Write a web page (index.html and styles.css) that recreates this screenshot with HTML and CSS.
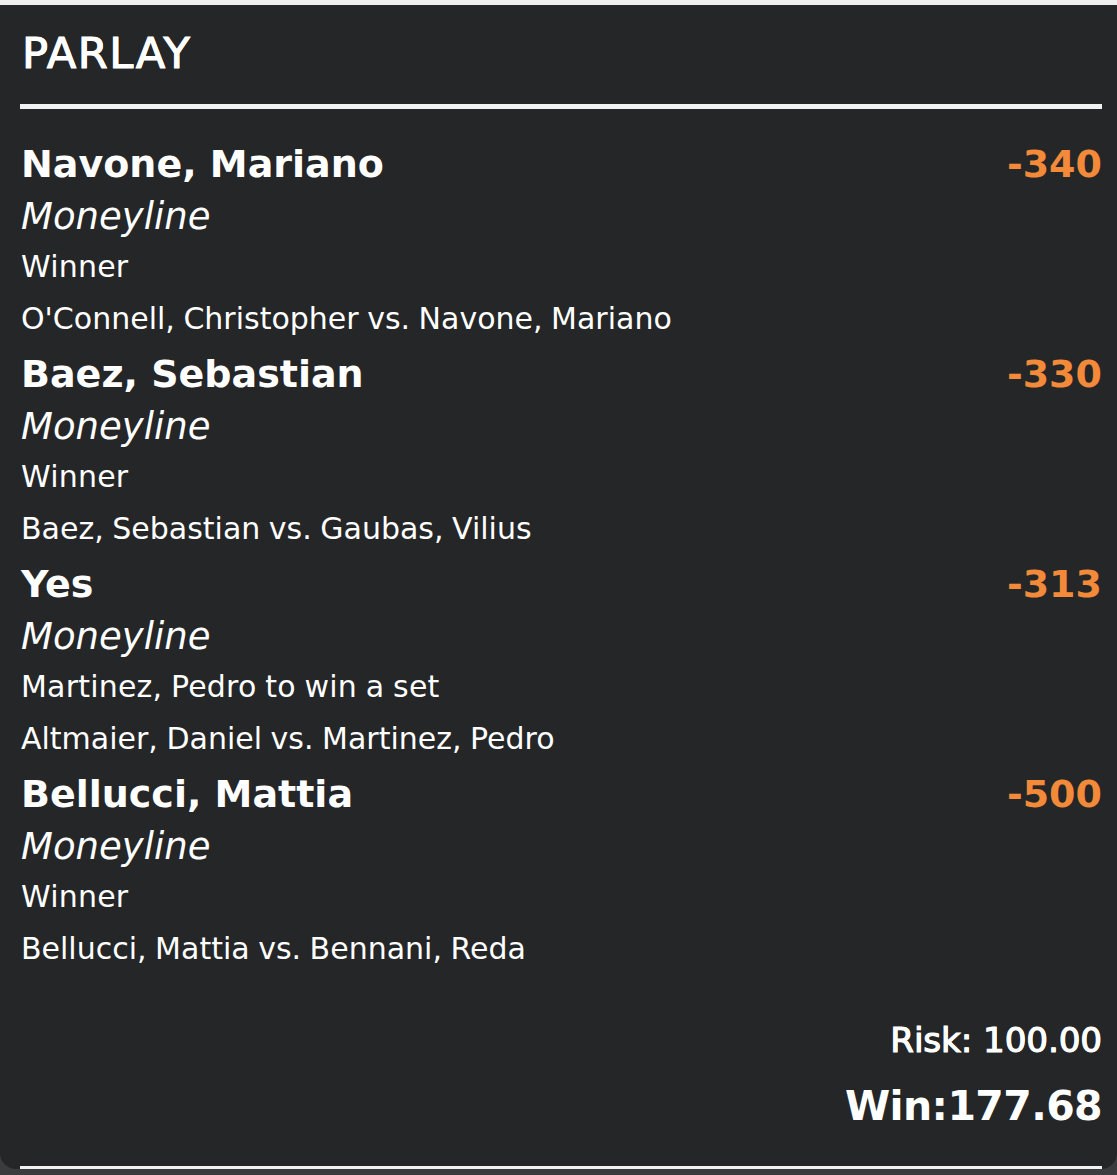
FILE: index.html
```html
<!DOCTYPE html>
<html lang="en">
<head>
<meta charset="utf-8">
<title>Parlay</title>
<link rel="stylesheet" href="styles.css">
</head>
<body>
<div class="topstrip"></div>
<section class="card">
  <h1 class="title">PARLAY</h1>
  <div class="rule"></div>
  <div class="legs">
    <div class="leg">
      <div class="leg-head"><span class="pick">Navone, Mariano</span><span class="odds">-340</span></div>
      <div class="market">Moneyline</div>
      <div class="detail">Winner</div>
      <div class="detail match">O'Connell, Christopher vs. Navone, Mariano</div>
    </div>
    <div class="leg">
      <div class="leg-head"><span class="pick">Baez, Sebastian</span><span class="odds">-330</span></div>
      <div class="market">Moneyline</div>
      <div class="detail">Winner</div>
      <div class="detail match">Baez, Sebastian vs. Gaubas, Vilius</div>
    </div>
    <div class="leg">
      <div class="leg-head"><span class="pick">Yes</span><span class="odds">-313</span></div>
      <div class="market">Moneyline</div>
      <div class="detail">Martinez, Pedro to win a set</div>
      <div class="detail match">Altmaier, Daniel vs. Martinez, Pedro</div>
    </div>
    <div class="leg">
      <div class="leg-head"><span class="pick">Bellucci, Mattia</span><span class="odds">-500</span></div>
      <div class="market">Moneyline</div>
      <div class="detail">Winner</div>
      <div class="detail match">Bellucci, Mattia vs. Bennani, Reda</div>
    </div>
  </div>
  <div class="totals">
    <div class="risk">Risk: 100.00</div>
    <div class="win">Win:177.68</div>
  </div>
  <div class="rule rule-bottom"></div>
</section>
</body>
</html>
```
FILE: styles.css
```css
html, body {
  margin: 0;
  padding: 0;
}
body {
  background: #3b3c3e;
  font-family: "DejaVu Sans", "Liberation Sans", sans-serif;
  color: #ffffff;
  height: 1175px;
  overflow: hidden;
}
.topstrip {
  height: 5px;
  background: #efefef;
}
.card {
  background: #252628;
  padding: 18px 15px 0 20px;
  border-radius: 0 0 16px 16px;
}
.title {
  margin: 0 0 21px 2px;
  font-size: 43px;
  font-weight: 400;
  line-height: 60px;
  letter-spacing: 1.6px;
  -webkit-text-stroke: 1px #ffffff;
  text-shadow: 0.5px 0 0 #ffffff;
}
.rule {
  height: 5px;
  background: #f2f2f2;
}
.legs {
  padding-top: 27px;
}
.leg {
  display: flex;
  flex-direction: column;
  padding-left: 1px;
}
.leg-head {
  display: flex;
  justify-content: space-between;
  align-items: center;
  height: 56px;
}
.pick {
  font-size: 38px;
  font-weight: 700;
}
.odds {
  font-size: 38px;
  font-weight: 700;
  color: #f28a3a;
}
.market {
  height: 50px;
  line-height: 50px;
  font-size: 37px;
  font-style: italic;
}
.detail {
  height: 50px;
  line-height: 50px;
  font-size: 30px;
  word-spacing: -1px;
  letter-spacing: 0.2px;
}
.detail.match {
  height: 54px;
  line-height: 54px;
  letter-spacing: 0;
}
.totals {
  display: flex;
  flex-direction: column;
  align-items: flex-end;
  padding-top: 39px;
}
.risk {
  height: 50px;
  line-height: 50px;
  font-size: 34px;
  -webkit-text-stroke: 1px #ffffff;
  text-shadow: 0.5px 0 0 #ffffff;
}
.win {
  margin-top: 11px;
  height: 60px;
  line-height: 60px;
  font-size: 41px;
  font-weight: 700;
  letter-spacing: -0.6px;
}
.rule-bottom {
  margin-top: 30px;
  height: 3px;
}
```
